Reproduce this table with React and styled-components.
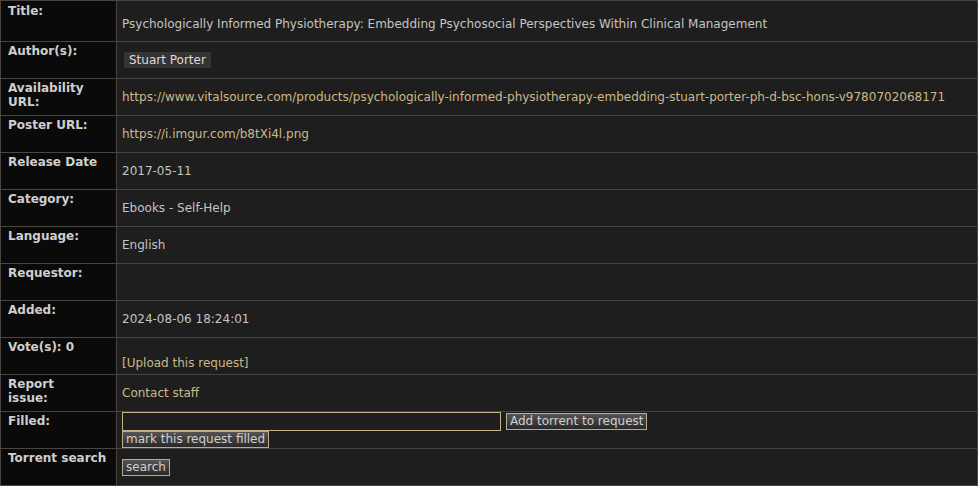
import React from "react";
import styled, { createGlobalStyle } from "styled-components";

const GlobalStyle = createGlobalStyle`
  html, body {
    margin: 0;
    padding: 0;
    background: #1f1e1e;
  }
  body {
    font-family: "DejaVu Sans", Verdana, sans-serif;
    font-size: 12px;
    color: #c4c4c4;
  }
`;

const DetailsTable = styled.table`
  width: 100%;
  border-collapse: collapse;
  border: 1px solid #4c4440;

  td {
    border: 1px solid #4c4440;
  }
`;

const Label = styled.td`
  width: 101px;
  height: 28px;
  background: #0b0a0a;
  color: #cfcfcf;
  font-weight: bold;
  line-height: 14px;
  vertical-align: top;
  padding: ${(p) => (p.$first ? "3px 7px 9px" : "2px 7px 6px")};
`;

const Value = styled.td`
  background: #1f1e1e;
  color: #c4c4c4;
  line-height: 14px;
  vertical-align: middle;
  padding: ${(p) => (p.$first ? "5px 5px 0" : "0 5px")};
`;

const TextLink = styled.a`
  color: #c9b98a;
  text-decoration: none;
`;

const Tag = styled.span`
  display: inline-block;
  background: #353433;
  color: #dcdcdc;
  padding: 1px 5px;
  margin-left: 2px;
`;

const FillInput = styled.input`
  box-sizing: border-box;
  width: 379px;
  height: 19px;
  background: #1f1e1e;
  border: 1px solid #c2b488;
  color: #ddd;
  font-family: inherit;
  font-size: 12px;
  margin: 0 5px 0 0;
  padding: 0 3px;
`;

const Button = styled.button`
  box-sizing: border-box;
  height: 17px;
  background: linear-gradient(#555453, #2a2928);
  border: 1px solid #b8ad8c;
  color: #d0d0d0;
  font-family: "DejaVu Sans", Verdana, sans-serif;
  font-size: 12px;
  line-height: 13px;
  padding: 0 3px;
  margin: 0;
  cursor: pointer;
`;

const Stack = styled.div`
  display: flex;
  flex-direction: column;
  align-items: flex-start;
`;

const Line = styled.div`
  display: flex;
  align-items: center;
`;

const Spacer = styled.div`
  height: 14px;
`;

export default function App() {
  return (
    <>
      <GlobalStyle />
      <DetailsTable>
        <tbody>
          <tr>
            <Label $first>Title:</Label>
            <Value $first>
              Psychologically Informed Physiotherapy: Embedding Psychosocial
              Perspectives Within Clinical Management
            </Value>
          </tr>
          <tr>
            <Label>Author(s):</Label>
            <Value>
              <Tag>Stuart Porter</Tag>
            </Value>
          </tr>
          <tr>
            <Label>Availability URL:</Label>
            <Value>
              <TextLink href="#">
                https://www.vitalsource.com/products/psychologically-informed-physiotherapy-embedding-stuart-porter-ph-d-bsc-hons-v9780702068171
              </TextLink>
            </Value>
          </tr>
          <tr>
            <Label>Poster URL:</Label>
            <Value>
              <TextLink href="#">https://i.imgur.com/b8tXi4l.png</TextLink>
            </Value>
          </tr>
          <tr>
            <Label>Release Date</Label>
            <Value>2017-05-11</Value>
          </tr>
          <tr>
            <Label>Category:</Label>
            <Value>Ebooks - Self-Help</Value>
          </tr>
          <tr>
            <Label>Language:</Label>
            <Value>English</Value>
          </tr>
          <tr>
            <Label>Requestor:</Label>
            <Value></Value>
          </tr>
          <tr>
            <Label>Added:</Label>
            <Value>2024-08-06 18:24:01</Value>
          </tr>
          <tr>
            <Label>Vote(s): 0</Label>
            <Value>
              <Spacer />
              <TextLink href="#">[Upload this request]</TextLink>
            </Value>
          </tr>
          <tr>
            <Label>
              Report
              <br />
              issue:
            </Label>
            <Value>
              <TextLink href="#">Contact staff</TextLink>
            </Value>
          </tr>
          <tr>
            <Label>Filled:</Label>
            <Value>
              <Stack>
                <Line>
                  <FillInput type="text" />
                  <Button>Add torrent to request</Button>
                </Line>
                <Button>mark this request filled</Button>
              </Stack>
            </Value>
          </tr>
          <tr>
            <Label>Torrent search</Label>
            <Value>
              <Button>search</Button>
            </Value>
          </tr>
        </tbody>
      </DetailsTable>
    </>
  );
}
